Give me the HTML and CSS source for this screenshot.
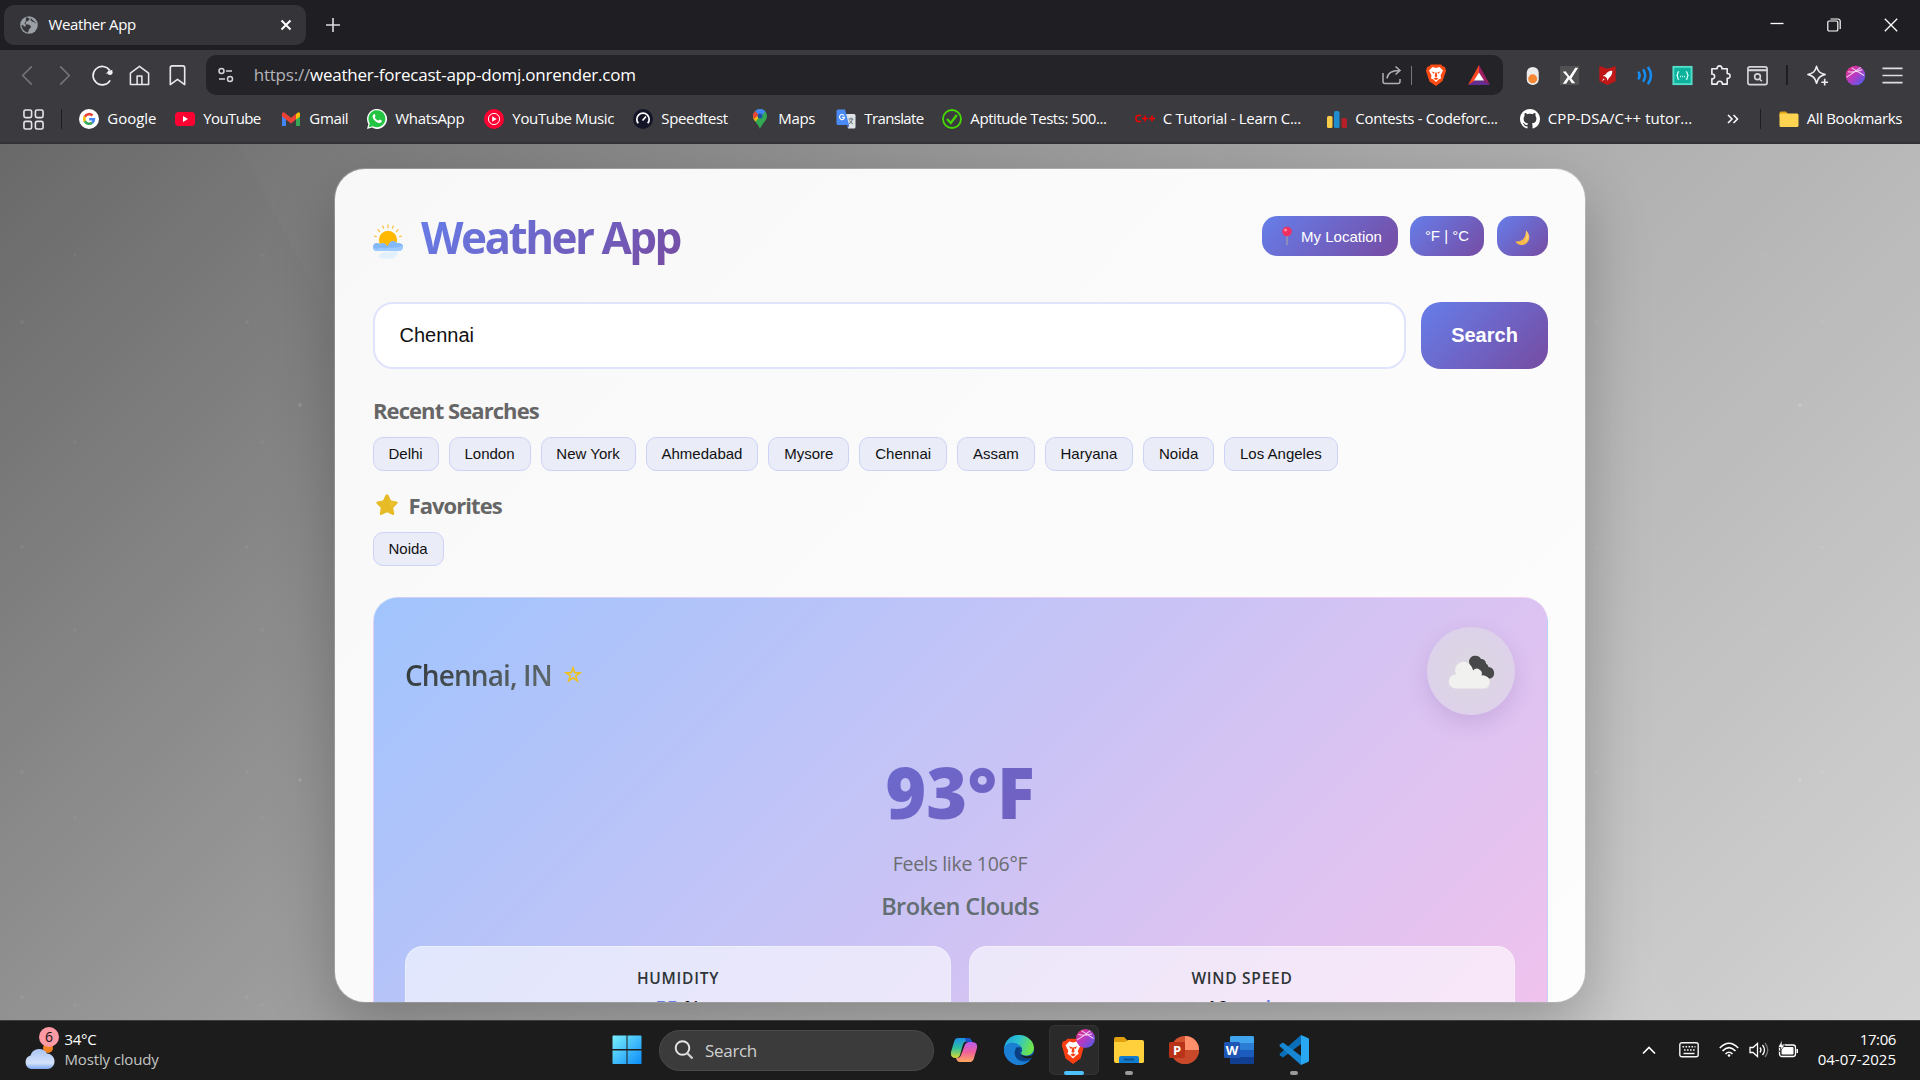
FILE: index.html
```html
<!DOCTYPE html>
<html lang="en">
<head>
<meta charset="utf-8">
<title>Weather App</title>
<link rel="stylesheet" href="styles.css">
</head>
<body>
<div class="tabstrip">
  <div class="tab">
    <svg class="i18" viewBox="0 0 18 18"><circle cx="9" cy="9" r="8.8" fill="#9aa0a6"/><path d="M6 1.8C9 1.5 10 3 8.5 4.2S5.500 5 5 7s3.500 1.500 5 2.500 0 2.500-1 3.500-.5 3-1.500 3.200C3.500 15 1.800 12 2 9c1.500.5 2 2 3.500 2M11 2.500c-.5 1.500.5 3 2 3s1.500 1 3 1.500" fill="#353439" stroke="#353439" stroke-width=".6"/></svg>
    <span class="tab-title">Weather App</span>
    <svg class="tab-x" viewBox="0 0 12 12"><path d="M1.500 1.500l9 9M10.500 1.500l-9 9" stroke="#fff" stroke-width="2"/></svg>
  </div>
  <svg class="newtab" viewBox="0 0 14 14"><path d="M7 0v14M0 7h14" stroke="#dcdcde" stroke-width="1.600"/></svg>
  <div class="winbtns">
    <svg viewBox="0 0 14 14"><path d="M.5 5.500h13" stroke="#fff" stroke-width="1.300"/></svg>
    <svg viewBox="0 0 14 14"><rect x=".8" y="3" width="10" height="10" rx="1.300" fill="none" stroke="#fff" stroke-width="1.200"/><path d="M3.500 1h7.500a2.200 2.200 0 0 1 2.200 2.200V11" fill="none" stroke="#fff" stroke-width="1.200"/></svg>
    <svg viewBox="0 0 14 14"><path d="M.8.8l12.400 12.400M13.200.8L.8 13.200" stroke="#fff" stroke-width="1.300"/></svg>
  </div>
</div>
<div class="toolbar">
  <div class="nav">
    <svg viewBox="0 0 24 24"><path d="M16.500 2.500L7 12l9.500 9.500" stroke="#77767c" stroke-width="1.600" fill="none"/></svg>
    <svg viewBox="0 0 24 24"><path d="M7.500 2.500L17 12l-9.500 9.500" stroke="#77767c" stroke-width="1.600" fill="none"/></svg>
    <svg viewBox="0 0 24 24"><path d="M19.500 6.500A9.600 9.600 0 1 0 20 17" stroke="#f0f0f2" stroke-width="1.700" fill="none"/><path d="M15 9.800l7.200-3.800.2 4z" fill="#f0f0f2"/><circle cx="19.800" cy="9" r="2.600" fill="#f0f0f2"/></svg>
    <svg viewBox="0 0 24 24" fill="none" stroke="#e8e8ea" stroke-width="1.600" stroke-linejoin="round"><path d="M2.500 21.500V9.500L12 2.500l9.500 7v12zM9.500 21V12.500h5V21"/></svg>
    <svg viewBox="0 0 24 24" fill="none" stroke="#e8e8ea" stroke-width="1.700" stroke-linejoin="round"><path d="M4.500 21.500V4a2 2 0 0 1 2-2h11a2 2 0 0 1 2 2v17.500L12 16z"/></svg>
  </div>
  <div class="urlbox">
    <svg class="site" viewBox="0 0 16 16" fill="none" stroke="#d6d6d9" stroke-width="1.500"><circle cx="3.500" cy="4" r="2.500"/><path d="M8 4h6M1 12h6"/><circle cx="12" cy="12" r="2.500"/></svg>
    <span class="url"><i>https://</i>weather-forecast-app-domj.onrender.com</span>
    <svg class="share" viewBox="0 0 20 20" fill="none" stroke="#b0b0b4" stroke-width="1.500"><path d="M1 8v8.500a2 2 0 0 0 2 2h13a2 2 0 0 0 2-2V14M5 13.500C5.500 8 9 5.500 17.500 5.500M13.500 1.500l4.500 4-4.500 4"/></svg>
    <b class="vline"></b>
    <svg class="brave" viewBox="0 0 20 22"><path d="M5 .5h10l2 2 2 .5 1 4-3.500 10L10 22l-6.500-4.500L0 7l1-4 2-.5z" fill="#fb4b14"/><path d="M10 4l3.500-1L17 6.500l-2.500 5 .5 3-2.500 1L10 18l-2.500-2.500-2.500-1 .5-3L3 6.500 6.500 3z" fill="#fff"/><path d="M5.500 7.500l3 .7L8 10zm9 0l-3 .7.500 1.800zM9.300 8.500h1.400l.6 4-1.300.8-1.300-.8zM7.500 14.500l2.500-1 2.500 1-2.500 1.700z" fill="#fb4b14"/></svg>
    <svg class="bat" viewBox="0 0 22 20"><path d="M11 0L0 20l7-4.500L11 8z" fill="#ff4724"/><path d="M11 0l11 20-7-4.500L11 8z" fill="#9e1f63"/><path d="M0 20h22l-7-4.500H7z" fill="#662d91"/><path d="M11 7.500l5 8H6z" fill="#fff"/></svg>
  </div>
  <div class="ext">
    <svg viewBox="0 0 24 24"><rect x="6" y="3" width="12.500" height="19" rx="6.200" fill="#ebebeb"/><circle cx="12.200" cy="15.500" r="4.700" fill="#f58634"/></svg>
    <svg viewBox="0 0 24 24"><path d="M2 2h20v20H2z" fill="#515151"/><path d="M5 8l3-.5L12 13l6-9h3l-7 11 4 5h-3.500l-3-4-3 4.500H5l5-7z" fill="#fff"/></svg>
    <svg viewBox="0 0 24 24"><path d="M3.500 2l8.500 3 8.500-3v16L12 22l-8.500-4z" fill="#c01818"/><path d="M17 7c-4 0-6 2-7 4l-3 1.500 2.500.5 2 2 .5 2.500 1.500-3C15.500 13 17 11 17 7zM8 15l-2 3 3-2z" fill="#fff"/></svg>
    <svg viewBox="0 0 24 24" fill="none" stroke="#148cf0" stroke-width="2.700" stroke-linecap="round"><path d="M5 9q1.800 3 0 6M10 6.500q3.400 5.500 0 11M15 4q5.500 8 0 16"/></svg>
    <svg viewBox="0 0 24 24"><path d="M1.500 2h21v20h-21z" fill="#53ddc9"/><path d="M3.500 4h17v16h-17z" fill="#0cb29c"/><path d="M8.500 8q-1.500 0-1.500 2t-1.500 2q1.500 0 1.500 2t1.500 2M15.500 8q1.500 0 1.500 2t1.500 2q-1.500 0-1.500 2t-1.500 2" fill="none" stroke="#d9fff8" stroke-width="1.300"/><path d="M9.500 13h1M11.600 13h1M13.700 13h1" stroke="#d9fff8" stroke-width="1.400"/></svg>
    <svg viewBox="0 0 24 24" fill="none" stroke="#eeeef0" stroke-width="1.700" stroke-linejoin="round"><path d="M3 5h5.500c-.6-4 5.600-4 5 0H19v5c4-.5 4 5.500 0 5v6h-5c0-4-5.500-4-5.500 0H3v-5.500c3.800.5 3.800-5.500 0-5z"/></svg>
    <svg viewBox="0 0 24 24" fill="none" stroke="#d6d6da" stroke-width="1.700"><rect x="2" y="3" width="20" height="18.500" rx="2"/><path d="M2 6.500h20" stroke-width="2.200"/><circle cx="12" cy="13.300" r="3"/><path d="M14 15.500l2.500 2.500"/></svg>
  </div>
  <b class="vdark"></b>
  <div class="ext">
    <svg viewBox="0 0 24 24" fill="none" stroke="#ececef" stroke-width="1.700" stroke-linejoin="round"><path d="M11 2.500c1.500 5.500 3.500 7.300 9 8.500-5.500 1.500-7.500 3.500-9 9-1.500-5.500-3.500-7.500-9-9 5.500-1.200 7.500-3 9-8.500z"/><path d="M19.500 15.500v7M16 19h7"/></svg>
    <svg viewBox="0 0 24 24"><defs><linearGradient id="ball" x1="0" y1="0" x2="1" y2="1"><stop offset="0" stop-color="#ee2f7b"/><stop offset=".5" stop-color="#b43bc4"/><stop offset="1" stop-color="#3c62f0"/></linearGradient></defs><circle cx="12" cy="12" r="10.200" fill="url(#ball)"/><path d="M2.500 14Q10 9 17.500 3.500M8 4l13 8M4 8q8 1 15-2" fill="none" stroke="#fff" stroke-width="1.100" opacity=".8"/></svg>
    <svg viewBox="0 0 24 24"><path d="M1.500 4.500h21M1.500 12h21M1.500 19.500h21" stroke="#dededf" stroke-width="1.700"/></svg>
  </div>
</div>
<div class="bookmarks">
  <svg class="apps" viewBox="0 0 22 22" fill="none" stroke="#e4e4e6" stroke-width="1.700"><rect x="1" y="1" width="8" height="8" rx="1.700"/><rect x="13" y="1" width="8" height="8" rx="1.700"/><rect x="1" y="13" width="8" height="8" rx="1.700"/><rect x="13" y="13" width="8" height="8" rx="1.700"/></svg>
  <b class="vdark"></b>
  <div class="bmlist">
    <div class="bm"><svg viewBox="0 0 20 20"><circle cx="10" cy="10" r="10" fill="#fff"/><g fill="none" stroke-width="2.600"><path d="M5.800 7.800A4.900 4.900 0 0 1 13.500 6.500" stroke="#ea4335"/><path d="M5.800 7.700a5 5 0 0 0 0 4.600" stroke="#fbbc05"/><path d="M5.800 12.200a4.900 4.900 0 0 0 7.400 1.500" stroke="#34a853"/><path d="M10.200 10.200h4.700a5 5 0 0 1-1.700 3.500" stroke="#4285f4"/></g></svg><span class="roomy">Google</span></div>
    <div class="bm"><svg viewBox="0 0 20 20"><rect y="3" width="20" height="14" rx="3.500" fill="#ff0033"/><path d="M8 7l5 3-5 3z" fill="#fff"/></svg><span class="tight">YouTube</span></div>
    <div class="bm"><svg viewBox="0 0 20 20"><path d="M1 5v12h4V8z" fill="#4285f4"/><path d="M19 5v12h-4V8z" fill="#34a853"/><path d="M15 5l2-1.500c1-.8 2 0 2 1.500v2.500L15 10.500z" fill="#fbbc04"/><path d="M1 5c0-1.500 1.200-2.200 2.300-1.400L10 8.700l5-3.900v5.700l-5 3.900-5-3.900L1 7.500z" fill="#ea4335"/></svg><span>Gmail</span></div>
    <div class="bm"><svg viewBox="0 0 20 20"><path d="M0 20l1.400-5A10 10 0 1 1 5 18.600z" fill="#fff"/><path d="M1.700 18.300l1.100-4A8.500 8.500 0 1 1 6 17.200z" fill="#25c544"/><path d="M6.500 5.500c1-1 1.500 0 2 1.500.2.600-1 1-.7 1.600.8 1.500 2 2.500 3.500 3 .6.200 1-1.200 1.600-1 1.500.6 2.500 1 1.800 2.200-1.200 2-4 1.200-6.200-.6S4.500 7.500 6.500 5.500z" fill="#fff"/></svg><span>WhatsApp</span></div>
    <div class="bm"><svg viewBox="0 0 20 20"><circle cx="10" cy="10" r="10" fill="#ff0033"/><circle cx="10" cy="10" r="5.600" fill="none" stroke="#fff" stroke-width="1"/><path d="M8.200 7.200l4.600 2.800-4.600 2.800z" fill="#fff"/></svg><span>YouTube Music</span></div>
    <div class="bm"><svg viewBox="0 0 20 20"><circle cx="10" cy="10" r="10" fill="#141526"/><path d="M5.300 14.300a6.200 6.200 0 1 1 9.400 0" fill="none" stroke="#fff" stroke-width="1.700"/><path d="M9.500 11.500L13 7.500" stroke="#fff" stroke-width="1.700"/></svg><span>Speedtest</span></div>
    <div class="bm"><svg viewBox="0 0 20 20"><path d="M3 7a7 7 0 0 1 14 0c0 5-5 7-7 13-1.500-5-7-8-7-13z" fill="#34a853"/><path d="M3.100 8.200L9.500 1 5 2.200A7 7 0 0 0 3.100 8.200z" fill="#ea4335"/><path d="M5 2.200A7 7 0 0 1 15.300 2.500L10.500 8z" fill="#4285f4"/><path d="M3 7c0 2 1 4 2.500 5.500L12 5 5.500 5z" fill="#fbbc04"/><path d="M3 7a7 7 0 0 1 1.800-4.600l4 3.200L4 10z" fill="#ea4335"/><circle cx="10" cy="7" r="2.500" fill="#1a53a8"/></svg><span>Maps</span></div>
    <div class="bm"><svg viewBox="0 0 20 20"><path d="M9 5h9a1.500 1.500 0 0 1 1.500 1.500V18a1.500 1.500 0 0 1-1.500 1.500h-6z" fill="#dfe3e6"/><path d="M2 .5h7L13 16H2A1.500 1.500 0 0 1 .5 14.500V2A1.500 1.500 0 0 1 2 .5z" fill="#4a8af4"/><path d="M11 15.800h2l-1 3.700z" fill="#2457c5"/><path d="M8 6.500A2.500 2.500 0 1 0 8.500 8.300H6.200" fill="none" stroke="#fff" stroke-width="1.200"/><path d="M12.500 10h5M15 8.500V10M16.500 10q-1 3.500-3.500 5M13.500 11.500q1 2 3.500 3.500" fill="none" stroke="#667780" stroke-width="1"/></svg><span class="tight">Translate</span></div>
    <div class="bm"><svg viewBox="0 0 20 20" fill="none" stroke="#45d900"><circle cx="10" cy="10" r="9" stroke-width="1.800"/><path d="M5 10l3.800 4 6-8" stroke-width="2.400"/></svg><span class="snug">Aptitude Tests: 500...</span></div>
    <div class="bm"><svg viewBox="0 0 20 20" fill="none" stroke="#f00000" stroke-width="1.600"><path d="M6 6.500H2.500L1 8v3l1.500 1.500H6M7 9.500h6M10 6.500v6M14 9.500h6M17 6.500v6"/></svg><span class="wide">C Tutorial - Learn C...</span></div>
    <div class="bm"><svg viewBox="0 0 20 20"><rect y="7" width="5.500" height="12" rx="1.500" fill="#f8cc4b"/><rect x="7" y="2" width="5.500" height="17" rx="1.500" fill="#1f8dd0"/><rect x="14.500" y="9" width="5.500" height="10" rx="1.500" fill="#b51f27"/></svg><span class="wide">Contests - Codeforc...</span></div>
    <div class="bm"><svg viewBox="0 0 16 16"><path fill="#fff" d="M8 0C3.580 0 0 3.580 0 8c0 3.540 2.290 6.530 5.470 7.590.4.070.55-.17.55-.38 0-.19-.010-.82-.010-1.490-2.010.37-2.530-.49-2.690-.94-.090-.23-.48-.94-.82-1.130-.28-.15-.68-.52-.010-.53.63-.010 1.080.58 1.230.82.72 1.210 1.870.87 2.330.66.070-.52.28-.87.51-1.070-1.780-.2-3.640-.89-3.640-3.950 0-.87.31-1.590.82-2.150-.080-.2-.36-1.020.080-2.120 0 0 .67-.21 2.200.82.64-.18 1.320-.27 2-.27s1.360.090 2 .27c1.530-1.040 2.200-.82 2.200-.82.44 1.100.16 1.920.080 2.120.51.56.82 1.270.82 2.150 0 3.070-1.870 3.750-3.650 3.950.29.25.54.73.54 1.480 0 1.070-.010 1.930-.010 2.200 0 .21.15.46.55.38A8.010 8.010 0 0 0 16 8c0-4.420-3.580-8-8-8z"/></svg><span class="full">CPP-DSA/C++ tutor...</span></div>
  </div>
  <svg class="more" viewBox="0 0 12 10"><path d="M1 1l4 4-4 4M6.500 1l4 4-4 4" fill="none" stroke="#fff" stroke-width="1.500"/></svg>
  <b class="vdark"></b>
  <div class="bm all"><svg viewBox="0 0 20 20"><path d="M.5 4A1.500 1.500 0 0 1 2 2.500h5L9 5v3H.5z" fill="#dfa416"/><rect x=".5" y="4.500" width="19" height="13.500" rx="1.500" fill="#fdd352"/></svg><span>All Bookmarks</span></div>
</div>

<main class="page">
  <section class="app">
    <header class="head">
      <svg class="sun" viewBox="0 0 30 36"><g stroke="#f9c440" stroke-width="1.300" stroke-linecap="round"><path d="M15 1v2.500M9.800 2l.7 2.200M20.200 2l-.7 2.200M5 5.800l1.500 1.700M25 5.800l-1.500 1.700M1.500 12l1.800.8M28.500 12l-1.800.8"/></g><circle cx="15" cy="16" r="9.200" fill="#ffb900"/><path d="M4 27a4 4 0 0 1 0-8q2 0 3 1Q9 18.500 12 19.500q1.500 2.500 3 2.500 1.500-5 5-5 3 0 4 2 6-.5 6 3.500 0 4-4 4.500z" fill="#83b9fb"/><path d="M4 27a4 4 0 0 1-3.700-3Q5 25.500 9 23.500q3 2 6 0 8 1 14.500-1.500 0 5-4 5z" fill="#9ecbff"/><path d="M8.500 34.500a2.500 2.500 0 0 1 0-5q3-3 7-1 3-2 8-1.500 3 3-.5 4 0 3.500-4 3.500z" fill="#e2f0fd"/></svg>
      <h1>Weather App</h1>
      <div class="actions">
        <button class="gbtn loc"><svg viewBox="0 0 14 20"><path d="M7 9v10" stroke="#9d9daa" stroke-width="1.300"/><circle cx="7" cy="5.500" r="4.800" fill="#f03060"/><circle cx="5.500" cy="4" r="1.500" fill="#ff8aa4"/></svg>My Location</button>
        <button class="gbtn unit">°F | °C</button>
        <button class="gbtn moon"><svg viewBox="0 0 16 16"><path d="M11 .5c6 5 3.500 14.500-4.500 14.500-3 0-5-1.500-6-3.500C7 12 11 8 11 .5z" fill="#f9b84a"/><path d="M11 .5c3.500 4 3.500 9-1.500 12Q12 7 11 .5z" fill="#fccf72"/></svg></button>
      </div>
    </header>
    <div class="search"><div class="field">Chennai</div><button class="go">Search</button></div>
    <h2>Recent Searches</h2>
    <div class="chips"><button>Delhi</button><button>London</button><button>New York</button><button>Ahmedabad</button><button>Mysore</button><button>Chennai</button><button>Assam</button><button>Haryana</button><button>Noida</button><button>Los Angeles</button></div>
    <h2><svg viewBox="0 0 24 24"><path d="M12 1.200q1 0 1.600 1.300L16 7.600l5.500.8q2.200.5.700 2.300l-4 4 1 5.800q.2 2.200-1.900 1.300L12 19.200 6.700 21.800q-2.100.9-1.900-1.300l1-5.800-4-4Q.3 8.900 2.500 8.400L8 7.600l2.400-5.100Q11 1.200 12 1.200z" fill="#e6bb26"/><path d="M12 2.500l2.500 6 6.500 1-5 4.500" fill="#eec63a" opacity=".6"/></svg>Favorites</h2>
    <div class="chips"><button>Noida</button></div>
    <article class="weather">
      <div class="top">
        <h3>Chennai, IN</h3>
        <svg class="fav" viewBox="0 0 18 17"><path d="M9 1.800l1.700 4.900h5.200l-4.200 3.100 1.600 5L9 11.800l-4.300 3 1.600-5L2.100 6.700h5.200z" fill="none" stroke="#eec21d" stroke-width="1.600"/></svg>
        <div class="cond"><svg viewBox="0 0 48 38"><path d="M21 9a6.500 6.500 0 0 1 12-2 4.500 4.500 0 0 1 5 4.500 4.500 4.500 0 0 1 2.500 3.500 6 6 0 0 1 2 11.500H34L22 16z" fill="#48484a"/><path d="M7.500 36.500a6.800 6.800 0 0 1 .5-14 8.500 8.500 0 0 1 15.500-8 8 8 0 0 1 1.500 4 5 5 0 0 1 8.500 5 5 5 0 0 1 4 .5 6.500 6.500 0 0 1-1 12.500z" fill="#f1f1f0"/></svg></div>
      </div>
      <div class="temp">93°F</div>
      <div class="feels">Feels like 106°F</div>
      <div class="desc">Broken Clouds</div>
      <div class="tiles">
        <div class="tile"><h4>HUMIDITY</h4><p><b>55</b> %</p></div>
        <div class="tile"><h4>WIND SPEED</h4><p>18 <b>mph</b></p></div>
      </div>
    </article>
  </section>
</main>

<footer class="taskbar">
  <div class="widget">
    <div class="wicon"><svg viewBox="0 0 32 26"><defs><linearGradient id="cl" x1="0" y1="0" x2="0" y2="1"><stop offset="0" stop-color="#a9c4f2"/><stop offset=".7" stop-color="#d3e2fb"/><stop offset="1" stop-color="#7fa8ee"/></linearGradient></defs><circle cx="24" cy="4" r="5" fill="#f08020"/><path d="M7 25a7 7 0 0 1-.5-13.500A9 9 0 0 1 23 9.500 7.800 7.800 0 0 1 24 25z" fill="url(#cl)"/></svg><span class="badge">6</span></div>
    <div class="wtext"><span class="t1">34°C</span><span class="t2">Mostly cloudy</span></div>
  </div>
  <div class="dock">
    <svg class="start" viewBox="0 0 30 30"><defs><linearGradient id="win" x1="0" y1="0" x2="1" y2="1"><stop offset="0" stop-color="#7af0fd"/><stop offset="1" stop-color="#0c8cf8"/></linearGradient></defs><path d="M1 .5h13.500V14H.5V1zM15.500.5H29l.5.5v13h-14zM.5 15.500h14V29H1l-.5-.5zM15.500 15.500h14V29h-14z" fill="url(#win)"/></svg>
    <div class="tsearch"><svg viewBox="0 0 20 20"><circle cx="8.500" cy="8" r="6.800" fill="none" stroke="#e6e6e6" stroke-width="1.900"/><path d="M13 13l5.500 5.500" stroke="#d0d0d0" stroke-width="2.400"/></svg><span>Search</span></div>
    <div class="slots">
      <div class="slot"><svg viewBox="0 0 30 30"><defs><linearGradient id="c1" x1="0" y1="0" x2="0" y2="1"><stop offset="0" stop-color="#1b90e8"/><stop offset=".5" stop-color="#2ec0a0"/><stop offset="1" stop-color="#d8dc30"/></linearGradient><linearGradient id="c2" x1="0" y1="0" x2="0" y2="1"><stop offset="0" stop-color="#b85cf0"/><stop offset=".5" stop-color="#f0609a"/><stop offset="1" stop-color="#ffa860"/></linearGradient></defs><path d="M9 3h10q3 0 4 4l-6-.5q-2 0-3 3L11 20q-1 3-4 3-6 0-5-6l3-10Q6 3 9 3z" fill="url(#c1)"/><path d="M21 27H11q-3 0-4-4 4 .5 5-3l4-10.500q1-2.500 4-2.500h3q6 0 5 6l-3 10q-1 4-4 4z" fill="url(#c2)"/><path d="M16 3h3q3 0 4 4l-6 0z" fill="#1c50c8"/></svg></div>
      <div class="slot"><svg viewBox="0 0 30 30"><defs><linearGradient id="e1" x1="0" y1="0" x2="1" y2=".3"><stop offset="0" stop-color="#1f9fdc"/><stop offset=".5" stop-color="#2cc3d0"/><stop offset="1" stop-color="#6de34e"/></linearGradient></defs><circle cx="15" cy="15" r="15" fill="#0f5eb4"/><path d="M0 14C1 5 7 0 15 0s15 6 15 13c0 5-4 7.500-8 7.500-5 0-5.500-2-4.500-3.500 2-4-1-7-5-7-6 0-10 4-12 8z" fill="url(#e1)"/><path d="M0 14c1-4 5-7 10-6 3 0 6 2 6 4-5 2-6 8-3 12 3 3 8 4 13 1-5 6-13 6.500-18 3S0 21 0 14z" fill="#1b7fd4"/><path d="M13 12c-4 4-3 11 3 13 4 1.500 8 1 11-2l1-2q-5 2-9 0c-4-2-4-5-2-8z" fill="#0b3f83"/><path d="M16.500 14c2 2 0 3.500.5 5 1 2 6 3 10.500 1.500L30 18v4l-3 1q-6 1-9.500-2z" fill="#1c1c1c"/></svg></div>
      <div class="slot active"><svg viewBox="0 0 30 32"><path d="M8 4h12l2 2 3 1 1 4-4 14-8 6-8-6L2 11l1-4 3-1z" fill="#fb3d12"/><path d="M14 8l4-1 4 4-3 6 1 3-3 2-3 3-3-3-3-2 1-3-3-6 4-4z" fill="#fff"/><path d="M9.500 12l3.500 1-1 2.500zM18.500 12l-3.500 1 1 2.500zM13.200 13h1.600l.8 5-1.600 1-1.600-1zM11 21l3-1.500 3 1.500-3 2z" fill="#fb3d12"/></svg><svg class="ball" viewBox="0 0 24 24"><circle cx="12" cy="12" r="12" fill="url(#ball)"/><path d="M1 14Q10 9 18 2M7 2l15 10M3 7q9 2 17-1" fill="none" stroke="#fff" stroke-width="1.300" opacity=".75"/></svg></div>
      <div class="slot dot"><svg viewBox="0 0 30 30"><path d="M0 4a2 2 0 0 1 2-2h8l3 3v6H0z" fill="#e0a010"/><path d="M0 7h11l3-2h14a2 2 0 0 1 2 2v20a2 2 0 0 1-2 1H2a2 2 0 0 1-2-2z" fill="#ffcf3c"/><path d="M5 28v-5a2 2 0 0 1 2-2h16a2 2 0 0 1 2 2v5z" fill="#127cd0"/><path d="M10 24.500h10" stroke="#0c5290" stroke-width="2"/></svg></div>
      <div class="slot"><svg viewBox="0 0 30 30"><circle cx="16" cy="15" r="14" fill="#d35230"/><path d="M16 1a14 14 0 0 1 14 14H16z" fill="#ff8f6b"/><path d="M2 15h28a14 14 0 0 1-28 0z" fill="#c8492a"/><rect y="7" width="16" height="16" rx="1.500" fill="#b83318"/><text x="8" y="19.500" class="ic">P</text></svg></div>
      <div class="slot"><svg viewBox="0 0 30 30"><rect x="6" y="1" width="24" height="28" rx="1.500" fill="#1b5cbe"/><path d="M6 2.500A1.500 1.500 0 0 1 7.500 1h21A1.500 1.500 0 0 1 30 2.500V8H6z" fill="#41a5ee"/><path d="M6 8h24v7H6z" fill="#2b7cd3"/><path d="M6 22h24v5.500a1.500 1.500 0 0 1-1.500 1.500h-21A1.500 1.500 0 0 1 6 27.500z" fill="#103f91"/><rect y="7" width="16" height="16" rx="1.500" fill="#1d56b4"/><text x="8" y="19.500" class="ic">W</text></svg></div>
      <div class="slot dot"><svg viewBox="0 0 30 30"><path d="M22 0l7 3a2 2 0 0 1 1 2v20a2 2 0 0 1-1 2l-7 3z" fill="#2aa7f2"/><path d="M22 0v9L4 22.500 1 20.500q-1-1 0-2z" fill="#0a6fb8"/><path d="M22 30v-9L4 7.500 1 9.500q-1 1 0 2z" fill="#1787d4"/></svg></div>
    </div>
  </div>
  <div class="tray">
    <svg class="chev" viewBox="0 0 14 9"><path d="M1 7.500l6-6 6 6" fill="none" stroke="#fff" stroke-width="1.700"/></svg>
    <svg class="kb" viewBox="0 0 20 16"><rect x=".8" y=".8" width="18.400" height="14" rx="2" fill="none" stroke="#f4f4f4" stroke-width="1.400"/><path d="M3.500 4.800h13M5 8h11" stroke="#f4f4f4" stroke-width="1.600" stroke-dasharray="1.600 1.400"/><path d="M4.500 11.500h11" stroke="#f4f4f4" stroke-width="1.400"/></svg>
    <svg class="wifi" viewBox="0 0 20 16" fill="none" stroke="#fff" stroke-width="1.600"><path d="M.8 6Q10-3.500 19.200 6M3.500 9Q10 2.200 16.500 9M6.500 12q3.500-3.500 7 0"/><circle cx="10" cy="13.500" r="1.300" fill="#fff" stroke="none"/></svg>
    <svg class="spk" viewBox="0 0 20 16" fill="none" stroke="#fff" stroke-width="1.300"><path d="M1 5.500h3L8.500 1.500v13L4 10.500H1z"/><path d="M11 5.500q2 2.500 0 5M13.500 3q4 5 0 10"/><path d="M16 1q5.500 7 0 14" stroke="#777"/></svg>
    <svg class="batt" viewBox="0 0 21 18"><rect x="1.500" y="5" width="16" height="11.500" rx="2.500" fill="none" stroke="#fff" stroke-width="1.300"/><rect x="3.500" y="7" width="12" height="7.500" rx="1" fill="#fff"/><path d="M18.500 9h1.500v4h-1.500z" fill="#fff"/><path d="M4 0L0 7.500h3L1.500 12 7 5H4z" fill="#fff" stroke="#1c1c1c" stroke-width=".7"/></svg>
    <div class="clock"><span class="c1">17:06</span><span>04-07-2025</span></div>
  </div>
</footer>
</body>
</html>
```
FILE: styles.css
```css
*{box-sizing:border-box}
body{margin:0;width:1920px;height:1080px;overflow:hidden;display:flex;flex-direction:column;font-family:"Open Sans","Noto Sans",sans-serif;color:#fff;background:#1c1c1c}
svg{display:block;flex:none}
button{font-family:"Liberation Sans",Arial,sans-serif;border:0;margin:0;padding:0}
h1,h2,h3,h4,p{margin:0}
span{white-space:nowrap}

/* browser chrome */
.tabstrip{height:50px;background:#1f1e23;display:flex;align-items:center;flex:none;padding-left:4px}
.tab{width:302px;height:40px;border-radius:10px;background:#353439;display:flex;align-items:center;padding:0 14px 0 16px}
.i18{width:18px;height:18px}
.tab-title{font-size:15px;letter-spacing:-.38px;margin-left:10.500px;padding-bottom:2px;flex:1}
.tab-x{width:12px;height:12px}
.newtab{width:14px;height:14px;margin-left:20px}
.winbtns{display:flex;gap:43px;margin-left:auto;padding-right:22px}
.winbtns svg{width:14px;height:14px}
.toolbar{height:50px;background:#3b3a3f;display:flex;align-items:center;flex:none;padding-left:8.700px}
.nav{display:flex}
.nav svg{width:23px;height:23px;margin:0 7.250px}
.urlbox{width:1297px;height:40px;margin-left:10px;margin-right:10.400px;border-radius:10px;background:#242327;display:flex;align-items:center;padding:0 13px 0 12px}
.site{width:16px;height:16px}
.url{font-size:17px;letter-spacing:-.22px;margin-left:19.500px;padding-bottom:2px;flex:1}
.url i{font-style:normal;color:#b4b4ba}
.share{width:20px;height:20px}
.vline{width:1px;height:19px;background:#77777c;margin:0 14px 0 9px}
.brave{width:20px;height:22px}
.bat{width:22px;height:20px;margin-left:22px}
.ext{display:flex}
.ext svg{width:23px;height:23px;margin:0 7.300px}
.vdark{width:2px;height:20px;background:#1f1e23}
.toolbar .vdark{margin:0 10.500px 0 9.500px}
.bookmarks{height:44px;background:#3b3a3f;border-bottom:2px solid #323137;display:flex;align-items:center;flex:none;padding:0 18px 4px 22.500px}
.apps{width:21px;height:21px}
.bookmarks .vdark{margin-left:17px}
.bmlist{display:grid;grid-template-columns:96px 106px 86px 117px 149px 117px 86px 106px 192.500px 192.500px 192.500px 173px;margin-left:18px}
.bm{display:flex;align-items:center;gap:8px;font-size:15px;letter-spacing:-.36px}
.bm svg{width:20px;height:20px}
.bm span{padding-bottom:2px}
.bm .roomy{letter-spacing:-.05px}
.bm .tight{letter-spacing:-.65px}
.bm .snug{letter-spacing:-.43px}
.bm .wide{letter-spacing:-.3px}
.bm .full{letter-spacing:.03px}
.more{width:12px;height:10px;margin-left:34px}
.bookmarks .more+.vdark{margin-left:21px}
.all{margin-left:18px}

/* page */
.page{height:876px;flex:none;overflow:hidden;padding-top:25px;
background:
radial-gradient(circle 2px at 22px 178px,rgba(255,255,255,.05) 90%,transparent) 0 0/225px 225px,
radial-gradient(circle 2px at 75px 111px,rgba(255,255,255,.04) 90%,transparent) 0 0/187.500px 187.500px,
radial-gradient(circle 2px at 300px 261px,rgba(255,255,255,.12) 90%,transparent) 0 0/375px 375px,
linear-gradient(62deg,transparent 29.500%,rgba(255,255,255,.015) 29.500%,rgba(255,255,255,.015) 70.500%,transparent 70.500%),
linear-gradient(135deg,#696969,#a9a9a9 50%,#d3d3d3)}
.app{width:1250px;height:833px;margin:0 auto;border-radius:30px;overflow:hidden;background:linear-gradient(135deg,#f8f8f8,#fdfdfd);padding:37px 37px 0 38px;box-shadow:0 25px 62px rgba(0,0,0,.25),0 0 0 1px rgba(255,255,255,.25)}
.head{height:60px;display:flex;align-items:center}
.sun{width:30px;height:36px;margin-top:12px}
h1{font-size:44px;font-weight:700;letter-spacing:-2.520px;line-height:60px;margin-left:18px;margin-top:2px;padding-right:3px;background:linear-gradient(135deg,#667eea,#764ba2);-webkit-background-clip:text;background-clip:text;color:transparent}
.actions{display:flex;gap:12px;margin-left:auto}
.gbtn{height:40px;border-radius:15px;background:linear-gradient(135deg,#667eea,#764ba2);color:#fff;font-size:15px;display:flex;align-items:center;justify-content:center}
.loc{width:136px;padding-left:2px}
.loc svg{width:14px;height:20px;margin-right:7px}
.unit{width:74px;padding-bottom:2px}
.moon{width:51px;margin-left:1px}
.moon svg{width:16px;height:16px;margin-top:3px}
.search{display:flex;gap:15px;margin-top:36px;margin-bottom:27px}
.field{flex:1;height:67px;border:2px solid #dfe3fb;border-radius:20px;background:#fff;color:#111;font:20px/63px "Liberation Sans",Arial,sans-serif;padding-left:24.500px}
.go{width:127px;border-radius:20px;background:linear-gradient(135deg,#667eea,#764ba2);color:#fff;font-size:20px;font-weight:700}
h2{height:29px;line-height:28px;font-size:22px;font-weight:700;letter-spacing:-.93px;color:#666;display:flex;align-items:center;margin-bottom:12px;padding-bottom:2px}
h2 svg{width:24px;height:24px;margin:0 9.500px 0 2px}
.chips{display:flex;gap:10px;margin-bottom:20px;margin-left:-.3px}
.chips button{height:34px;border:1px solid #ccd3f7;border-radius:10px;background:#eaecf8;color:#111;font-size:15px;padding:0 15px 2px 14.800px}

.weather{height:640px;margin-top:31px;border-radius:25px;border:1px solid rgba(255,255,255,.2);background:linear-gradient(135deg,#a1c4fd,#fbc2eb);padding:29px 32px 0 31px}
.top{display:flex;align-items:center;height:88px}
h3{font-size:28px;font-weight:600;letter-spacing:-.9px;background:linear-gradient(135deg,#2d3436,#636e72);-webkit-background-clip:text;background-clip:text;color:transparent;padding-top:8px}
.fav{width:18px;height:17px;margin-left:12px;margin-top:7px}
.cond{width:88px;height:88px;border-radius:50%;margin-left:auto;background:radial-gradient(circle,rgba(220,218,222,.9),rgba(222,212,236,.7));box-shadow:0 8px 20px rgba(110,80,150,.18);display:flex;align-items:center;justify-content:center}
.cond svg{width:48px;height:38px;margin-left:2px}
.temp{margin-top:29px;height:96px;line-height:96px;text-align:center;font-size:70px;font-weight:800;background:linear-gradient(135deg,#667eea,#764ba2);-webkit-background-clip:text;background-clip:text;color:transparent}
.feels{height:30px;line-height:30px;margin-top:9px;text-align:center;font-size:19.500px;letter-spacing:-.3px;color:#6b6d72}
.desc{height:34px;line-height:34px;margin-top:10px;text-align:center;font-size:23.500px;font-weight:600;letter-spacing:-.55px;color:#636e72}
.tiles{display:grid;grid-template-columns:1fr 1fr;gap:18px;margin-top:23px}
.tile{height:120px;border:1px solid rgba(255,255,255,.35);border-radius:18px;background:rgba(255,255,255,.6);padding-top:20px;text-align:center;color:#111}
h4{font-size:15.500px;line-height:22px;font-weight:600;letter-spacing:.75px;color:#2d3436}
.tile p{font-size:20px;line-height:24px;font-weight:600;margin-top:7px}
.tile b{color:#667eea;font-weight:600}

/* taskbar */
.taskbar{height:60px;flex:none;background:#1c1c1c;border-top:1px solid #3a3d3c;display:flex;align-items:center;padding:0 24px 1px}
.widget{display:flex;width:588px;gap:8.500px}
.wicon{position:relative;width:32px;height:42px;padding-top:15px}
.wicon svg{width:32px;height:26px}
.badge{position:absolute;left:15px;top:-2px;width:20px;height:20px;border-radius:50%;background:#ff99a4;color:#111;font-size:14px;line-height:20px;text-align:center}
.wtext{display:flex;flex-direction:column;font-size:15px;line-height:20px}
.t1{letter-spacing:-.3px}
.t2{color:#c4c4c4;letter-spacing:-.15px}
.dock{display:flex;align-items:center}
.start{width:30px;height:30px}
.tsearch{width:275px;height:41px;border-radius:21px;background:#3b3b3b;border:1px solid #4a4a4a;margin-left:17px;display:flex;align-items:center;padding-left:14px;gap:11px;font-size:17px;letter-spacing:-.31px;color:#d0d0d0}
.tsearch svg{width:20px;height:20px}
.slots{display:flex;gap:5px;margin-left:5px}
.slot{width:50px;height:50px;position:relative;display:flex;align-items:center;justify-content:center}
.slot>svg{width:30px;height:30px}
.active{background:#2a2a2a;border-radius:6px;box-shadow:inset 0 0 0 1px #343434}
.active .ball{position:absolute;left:27px;top:4px;width:19px;height:19px}
.active::after,.dot::after{content:"";position:absolute;bottom:0;left:21px;width:8px;height:4px;border-radius:2px;background:#9a9a9a}
.active::after{left:15px;width:20px;background:#4cc2ff}
.ic{font:700 13px "Open Sans",sans-serif;fill:#fff;text-anchor:middle}
.tray{display:flex;align-items:center;margin-left:auto;margin-right:1px}
.chev{width:14px;height:9px}
.kb{width:20px;height:16px;margin-left:23px}
.wifi{width:20px;height:16px;margin-left:20px}
.spk{width:20px;height:16px;margin-left:10px}
.batt{width:21px;height:18px;margin-left:9px;margin-top:-3px}
.clock{width:97px;display:flex;flex-direction:column;align-items:flex-end;font-size:15px;line-height:20px;padding-bottom:3px;margin-right:-1px}
.c1{letter-spacing:-.4px}
```
